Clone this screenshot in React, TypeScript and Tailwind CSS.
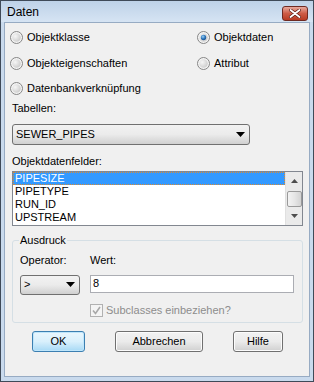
import React from "react";

function Radio({ checked }: { checked?: boolean }) {
  return (
    <svg width="13" height="13" viewBox="0 0 13 13" className="shrink-0">
      <defs>
        <radialGradient id="rg" cx="0.35" cy="0.35" r="0.7">
          <stop offset="0" stopColor="#f6f6f6" />
          <stop offset="1" stopColor="#cdcdcd" />
        </radialGradient>
        <radialGradient id="rd" cx="0.4" cy="0.35" r="0.7">
          <stop offset="0" stopColor="#9ad0f5" />
          <stop offset="0.6" stopColor="#2a72b8" />
          <stop offset="1" stopColor="#1b4f8a" />
        </radialGradient>
      </defs>
      <circle cx="6.5" cy="6.5" r="6" fill="#f4f4f4" stroke="#858585" strokeWidth="1" />
      <circle cx="6.5" cy="6.5" r="4.3" fill="url(#rg)" />
      {checked && <circle cx="6.5" cy="6.5" r="2.7" fill="url(#rd)" />}
    </svg>
  );
}

function Arrow() {
  return (
    <svg width="9" height="5" viewBox="0 0 9 5" className="shrink-0">
      <path d="M0 0 H9 L4.5 5 Z" fill="#000" />
    </svg>
  );
}

function RadioRow({ label, checked }: { label: string; checked?: boolean }) {
  return (
    <div className="flex items-center h-[25.5px] gap-[4px]">
      <Radio checked={checked} />
      <span className="leading-[13px]">{label}</span>
    </div>
  );
}

export default function App() {
  return (
    <div className="w-[314px] h-[382px] border border-[#3f4a58] bg-[#c9daed] flex flex-col font-['Liberation_Sans',Arial,sans-serif] text-[11px] text-black overflow-hidden">
      {/* Title bar */}
      <div className="h-[21px] shrink-0 flex items-center justify-between pl-[6px] pr-[5px] bg-gradient-to-b from-[#bed2e8] to-[#d6e4f3]">
        <span className="text-[12px] leading-[14px] text-black">Daten</span>
        <div className="w-[26px] h-[15px] mt-[3px] rounded-[3px] border border-[#6e2a22] bg-gradient-to-b from-[#e6a99e] via-[#cd5b45] to-[#b83a22] flex items-center justify-center">
          <svg width="12" height="9" viewBox="0 0 12 9">
            <path d="M1.5 1 L10.5 8 M10.5 1 L1.5 8" stroke="#5a1a12" strokeWidth="3.2" strokeLinecap="round" />
            <path d="M1.5 1 L10.5 8 M10.5 1 L1.5 8" stroke="#ffffff" strokeWidth="1.8" strokeLinecap="round" />
          </svg>
        </div>
      </div>

      {/* Client area */}
      <div className="flex-1 mx-[3px] mb-[4px] bg-[#f0f0f0] border border-[#97abc3] flex flex-col">
        {/* radios */}
        <div className="flex pt-[2px] pl-[5px]">
          <div className="w-[187px] flex flex-col">
            <RadioRow label="Objektklasse" />
            <RadioRow label="Objekteigenschaften" />
            <RadioRow label="Datenbankverknüpfung" />
          </div>
          <div className="flex flex-col">
            <RadioRow label="Objektdaten" checked />
            <RadioRow label="Attribut" />
          </div>
        </div>

        <div className="flex flex-col pl-[7px] pr-[6px]">
          <div className="h-[13px] leading-[13px]">Tabellen:</div>
          <div className="mt-[9px] w-[238px] h-[21px] rounded-[3px] border border-[#707070] bg-gradient-to-b from-[#f2f2f2] via-[#ebebeb] to-[#d0d0d0] flex items-center justify-between pl-[3px] pr-[4px]">
            <span className="leading-[13px]">SEWER_PIPES</span>
            <Arrow />
          </div>

          <div className="mt-[10px] h-[13px] leading-[13px]">Objektdatenfelder:</div>
          <div className="mt-[3px] w-[291px] h-[55px] border border-[#828790] bg-white flex">
            <div className="flex-1 flex flex-col">
              <div className="h-[13px] leading-[11px] bg-[#3399ff] text-white pl-[1px] border border-dotted border-[#d98a32]">PIPESIZE</div>
              <div className="h-[13px] leading-[13px] pl-[2px]">PIPETYPE</div>
              <div className="h-[13px] leading-[13px] pl-[2px]">RUN_ID</div>
              <div className="h-[13px] leading-[13px] pl-[2px]">UPSTREAM</div>
            </div>
            <div className="w-[17px] bg-[#eaeaea] border-l border-[#e0e0e0] flex flex-col items-center">
              <div className="h-[19px] flex items-center justify-center">
                <svg width="7" height="4" viewBox="0 0 7 4"><path d="M0 4 H7 L3.5 0 Z" fill="#4d4d4d" /></svg>
              </div>
              <div className="w-[15px] h-[16px] rounded-[2px] border border-[#9a9a9a] bg-gradient-to-r from-[#f3f3f3] via-[#e6e6e6] to-[#d3d3d3]" />
              <div className="flex-1 flex items-center justify-center">
                <svg width="7" height="4" viewBox="0 0 7 4"><path d="M0 0 H7 L3.5 4 Z" fill="#4d4d4d" /></svg>
              </div>
            </div>
          </div>

          {/* Group box */}
          <div className="relative mt-[14px] w-[291px] h-[83px] border border-[#d5dfe5] rounded-[3px] flex flex-col pt-[13px] pl-[7px]">
            <span className="absolute top-[-7px] left-[6px] px-[1px] bg-[#f0f0f0] leading-[13px]">Ausdruck</span>
            <div className="flex h-[13px] leading-[13px]">
              <span className="w-[70px]">Operator:</span>
              <span>Wert:</span>
            </div>
            <div className="flex mt-[8px] items-start">
              <div className="w-[60px] h-[20px] rounded-[3px] border border-[#707070] bg-gradient-to-b from-[#f2f2f2] via-[#ebebeb] to-[#d0d0d0] flex items-center justify-between pl-[3px] pr-[4px]">
                <span className="leading-[13px]">&gt;</span>
                <Arrow />
              </div>
              <div className="ml-[10px] w-[204px] h-[18px] border border-[#abadb3] bg-white flex items-center pl-[2px]">
                <span className="leading-[13px]">8</span>
              </div>
            </div>
            <div className="flex items-center mt-[9px] ml-[70px] gap-[3px]">
              <div className="w-[13px] h-[13px] border border-[#b1b1b1] bg-[#f4f4f4] flex items-center justify-center">
                <svg width="9" height="9" viewBox="0 0 9 9"><path d="M1 4.5 L3.5 7.5 L8 1" stroke="#a8a8a8" strokeWidth="1.6" fill="none" /></svg>
              </div>
              <span className="leading-[13px] text-[#8d8d8d]">Subclasses einbeziehen?</span>
            </div>
          </div>
        </div>

        {/* Buttons */}
        <div className="flex mt-[8px] pl-[27px]">
          <div className="w-[53px] h-[21px] rounded-[3px] border border-[#3c7fb1] bg-gradient-to-b from-[#eaf6fd] via-[#d9f0fc] to-[#a7d9f5] flex items-center justify-center shadow-[inset_0_0_0_1px_#bfe6fb]">OK</div>
          <div className="ml-[30px] w-[88px] h-[21px] rounded-[3px] border border-[#707070] bg-gradient-to-b from-[#f2f2f2] via-[#ebebeb] to-[#d0d0d0] flex items-center justify-center shadow-[inset_0_0_0_1px_#fcfcfc]">Abbrechen</div>
          <div className="ml-[30px] w-[50px] h-[21px] rounded-[3px] border border-[#707070] bg-gradient-to-b from-[#f2f2f2] via-[#ebebeb] to-[#d0d0d0] flex items-center justify-center shadow-[inset_0_0_0_1px_#fcfcfc]">Hilfe</div>
        </div>
      </div>
    </div>
  );
}
